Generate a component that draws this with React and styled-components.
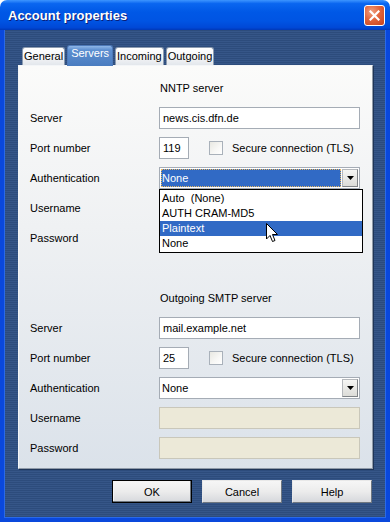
import styled, { createGlobalStyle } from "styled-components";

const Global = createGlobalStyle`
    html, body {
        margin: 0;
        padding: 0;
        background: #ffffff;
    }
    * {
        box-sizing: border-box;
    }
`

const tabs = ["General", "Servers", "Incoming", "Outgoing"];
const authOptions = ["Auto  (None)", "AUTH CRAM-MD5", "Plaintext", "None"];

export default function App() {
    return (
        <>
            <Global />
            <Window>
                <TitleBar>
                    <h1>Account properties</h1>
                    <Close>
                        <svg width="11" height="11" viewBox="0 0 11 11">
                            <path d="M1.5 1.5 L9.5 9.5 M9.5 1.5 L1.5 9.5" stroke="#fff" strokeWidth="2.2" strokeLinecap="square" />
                        </svg>
                    </Close>
                </TitleBar>

                <Body>
                    <Tabs>
                        {tabs.map((t) =>
                            <Tab key={t} $active={t === "Servers"}>{t}</Tab>
                        )}
                    </Tabs>

                    <Panel>
                        <Heading>NNTP server</Heading>
                        <Rows>
                            <Row>
                                <Label>Server</Label>
                                <Field>news.cis.dfn.de</Field>
                            </Row>
                            <Row>
                                <Label>Port number</Label>
                                <PortLine>
                                    <Field $width="30px">119</Field>
                                    <Check>
                                        <Box />
                                        <span>Secure connection (TLS)</span>
                                    </Check>
                                </PortLine>
                            </Row>
                            <Row>
                                <Label>Authentication</Label>
                                <ComboWrap>
                                    <Combo>
                                        <ComboText $focused>None</ComboText>
                                        <ComboButton>
                                            <svg width="7" height="4" viewBox="0 0 7 4"><path d="M0 0 H7 L3.5 4 Z" fill="#000" /></svg>
                                        </ComboButton>
                                    </Combo>
                                    <List>
                                        {authOptions.map((o) =>
                                            <Option key={o} $selected={o === "Plaintext"}>{o}</Option>
                                        )}
                                        <Pointer width="12" height="20" viewBox="0 0 12 20">
                                            <path d="M0.5 0.5 L0.5 16 L4 12.5 L6.5 18.5 L9 17.5 L6.5 11.5 L11.5 11.5 Z" fill="#fff" stroke="#000" strokeWidth="1" strokeLinejoin="miter" />
                                        </Pointer>
                                    </List>
                                </ComboWrap>
                            </Row>
                            <Row>
                                <Label>Username</Label>
                            </Row>
                            <Row>
                                <Label>Password</Label>
                            </Row>
                        </Rows>

                        <Heading $gap>Outgoing SMTP server</Heading>
                        <Rows>
                            <Row>
                                <Label>Server</Label>
                                <Field>mail.example.net</Field>
                            </Row>
                            <Row>
                                <Label>Port number</Label>
                                <PortLine>
                                    <Field $width="30px">25</Field>
                                    <Check>
                                        <Box />
                                        <span>Secure connection (TLS)</span>
                                    </Check>
                                </PortLine>
                            </Row>
                            <Row>
                                <Label>Authentication</Label>
                                <Combo>
                                    <ComboText>None</ComboText>
                                    <ComboButton>
                                        <svg width="7" height="4" viewBox="0 0 7 4"><path d="M0 0 H7 L3.5 4 Z" fill="#000" /></svg>
                                    </ComboButton>
                                </Combo>
                            </Row>
                            <Row>
                                <Label>Username</Label>
                                <Field $disabled />
                            </Row>
                            <Row>
                                <Label>Password</Label>
                                <Field $disabled />
                            </Row>
                        </Rows>
                    </Panel>

                    <Footer>
                        <Button $default>OK</Button>
                        <Button>Cancel</Button>
                        <Button>Help</Button>
                    </Footer>
                </Body>
            </Window>
        </>
    )
}

const Window = styled.div`
    width: 390px;
    height: 522px;
    display: flex;
    flex-direction: column;
    font-family: "Liberation Sans", Arial, sans-serif;
    font-size: 11px;
    color: #000;
`

const TitleBar = styled.div`
    height: 30px;
    flex: none;
    display: flex;
    align-items: center;
    justify-content: space-between;
    padding: 0 5px 0 8px;
    border-radius: 7px 7px 0 0;
    background: linear-gradient(to bottom, #3d95ff 0%, #0a66f0 12%, #0058e6 40%, #0054e3 70%, #0048d6 92%, #0038b8 100%);
    h1 {
        margin: 0;
        font-size: 13px;
        font-weight: 700;
        color: #ffffff;
        text-shadow: 1px 1px 0 #0a1e78;
    }
`

const Close = styled.div`
    width: 21px;
    height: 21px;
    display: flex;
    align-items: center;
    justify-content: center;
    border: 1px solid #ffffff;
    border-radius: 3px;
    background: radial-gradient(circle at 35% 30%, #f0a080 0%, #e2653c 45%, #c8421c 100%);
`

const Body = styled.div`
    flex: 1;
    display: flex;
    flex-direction: column;
    padding: 15px 13px 0 14px;
    border: 4px solid #0a48dc;
    border-top: none;
    box-shadow: inset 1px 0 0 #2a6ae8, inset -1px 0 0 #2a6ae8, inset 0 -1px 0 #2a6ae8;
    background: repeating-linear-gradient(to bottom, #2d4c7c 0px, #2d4c7c 1px, #365688 1px, #365688 2px);
`

const Tabs = styled.div`
    height: 20px;
    display: flex;
    align-items: flex-end;
    gap: 2px;
    padding-left: 4px;
    position: relative;
    z-index: 1;
`

const Tab = styled.div`
    height: ${(p) => p.$active ? "21px" : "18px"};
    margin-bottom: ${(p) => p.$active ? "-1px" : "0"};
    padding: ${(p) => p.$active ? "1px 3px 0" : "2px 1px 0"};
    border: 1px solid ${(p) => p.$active ? "#4d79b8" : "#8c9bb0"};
    border-bottom: none;
    border-radius: 3px 3px 0 0;
    color: ${(p) => p.$active ? "#ffffff" : "#000000"};
    background: ${(p) => p.$active
        ? "linear-gradient(to bottom, #8fb6e6 0%, #5d8fd0 20%, #4a7cc0 100%)"
        : "linear-gradient(to bottom, #ffffff 0%, #f2f3f5 60%, #e3e7ec 100%)"};
`

const Panel = styled.div`
    height: 404px;
    display: flex;
    flex-direction: column;
    padding: 14px 12px 0 11px;
    border: 1px solid #f4f6f8;
    border-right-color: #8f9aa8;
    border-bottom-color: #8f9aa8;
    box-shadow: 1px 1px 0 #1f3558;
    background: linear-gradient(to bottom, #fbfbfa 0%, #eff1f3 40%, #dbe2ea 100%);
`

const Heading = styled.div`
    height: 16px;
    line-height: 16px;
    margin-left: 130px;
    margin-top: ${(p) => p.$gap ? "41px" : "0"};
    margin-bottom: 11px;
    color: #000;
`

const Rows = styled.div`
    display: flex;
    flex-direction: column;
    gap: 8px;
`

const Row = styled.div`
    height: 22px;
    display: grid;
    grid-template-columns: 129px 1fr;
    align-items: center;
`

const Label = styled.div`
    color: #000;
`

const Field = styled.div`
    height: 22px;
    width: ${(p) => p.$width || "100%"};
    padding: 0 3px;
    display: flex;
    align-items: center;
    border: 1px solid ${(p) => p.$disabled ? "#c9c7ba" : "#a5acb5"};
    background: ${(p) => p.$disabled ? "#ece9d8" : "#ffffff"};
`

const PortLine = styled.div`
    display: flex;
    align-items: center;
    gap: 20px;
`

const Check = styled.div`
    display: flex;
    align-items: center;
    gap: 9px;
    margin-top: -1px;
`

const Box = styled.div`
    width: 14px;
    height: 14px;
    border: 1px solid #a9b1ba;
    background: linear-gradient(135deg, #e8e8e2 0%, #f8f8f6 60%, #ffffff 100%);
`

const ComboWrap = styled.div`
    position: relative;
`

const Combo = styled.div`
    height: 22px;
    display: flex;
    align-items: stretch;
    padding: 1px;
    gap: 1px;
    border: 1px solid #a5acb5;
    background: #ffffff;
`

const ComboText = styled.div`
    flex: 1;
    display: flex;
    align-items: center;
    padding-left: 1px;
    color: ${(p) => p.$focused ? "#ffffff" : "#000000"};
    background: ${(p) => p.$focused ? "#316ac5" : "transparent"};
    outline: ${(p) => p.$focused ? "1px dotted #e8b860" : "none"};
    outline-offset: -1px;
`

const ComboButton = styled.div`
    width: 16px;
    display: flex;
    align-items: center;
    justify-content: center;
    border: 1px solid #b5b8bc;
    border-right-color: #808488;
    border-bottom-color: #808488;
    background: linear-gradient(to bottom, #f6f6f4, #dcdcd8);
`

const List = styled.div`
    position: absolute;
    top: 100%;
    left: 0;
    width: 204px;
    padding: 1px 0;
    border: 1px solid #000000;
    background: #ffffff;
    z-index: 2;
`

const Option = styled.div`
    height: 15px;
    line-height: 15px;
    padding-left: 2px;
    white-space: pre;
    color: ${(p) => p.$selected ? "#ffffff" : "#000000"};
    background: ${(p) => p.$selected ? "#316ac5" : "transparent"};
`

const Pointer = styled.svg`
    position: absolute;
    left: 106px;
    top: 33px;
`

const Footer = styled.div`
    display: flex;
    justify-content: flex-end;
    gap: 10px;
    margin-top: 11px;
    padding-right: 1px;
`

const Button = styled.div`
    width: 80px;
    height: 23px;
    display: flex;
    align-items: center;
    justify-content: center;
    border: 1px solid ${(p) => p.$default ? "#000000" : "#e8e8e8"};
    border-right-color: ${(p) => p.$default ? "#000000" : "#6f7780"};
    border-bottom-color: ${(p) => p.$default ? "#000000" : "#6f7780"};
    box-shadow: ${(p) => p.$default ? "inset -1px -1px 0 #6f7780, inset 1px 1px 0 #f4f4f4" : "none"};
    background: linear-gradient(to bottom, #f6f6f6 0%, #ececec 50%, #d6d8dc 100%);
    color: #000;
`
